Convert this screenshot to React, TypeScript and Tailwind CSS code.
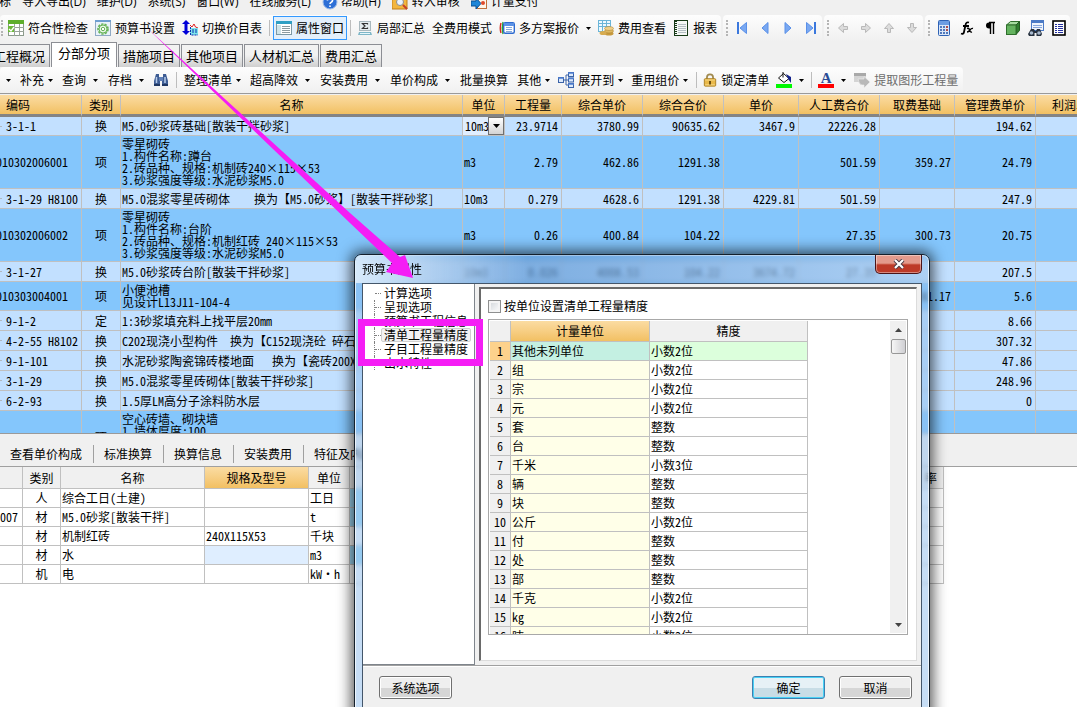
import type { ReactNode } from "react";

const Icon = ({ children, size = 16 }: { children: ReactNode; size?: number }) => (
  <svg width={size} height={size} viewBox="0 0 16 16" className="shrink-0" aria-hidden="true">
    {children}
  </svg>
);

const CheckGridIcon = () => (
  <Icon>
    <rect x="0.5" y="0.5" width="15" height="15" fill="#fff" stroke="#8a9a8a" />
    <rect x="0" y="0" width="16" height="4" fill="#5fae2c" />
    <path d="M0 7.5h16M0 11.5h16M6.5 4v12M11.5 4v12" stroke="#9aa49a" />
    <rect x="0" y="6" width="6" height="6" fill="#6db93a" />
    <path d="M1 9l2 2 3-4" stroke="#fff" fill="none" strokeWidth="1.3" />
  </Icon>
);

const BookSettingsIcon = () => (
  <Icon>
    <rect x="0.5" y="0.5" width="15" height="15" fill="#e9f2fb" stroke="#8fa9c4" />
    <rect x="0" y="0" width="16" height="2" fill="#6f9fd0" />
    <circle cx="8" cy="9" r="5" fill="#eaf7e6" stroke="#67b35a" strokeWidth="1.6" strokeDasharray="2.4 1.1" />
    <circle cx="8" cy="9" r="4" fill="none" stroke="#67b35a" />
    <circle cx="8" cy="9" r="1.7" fill="#fff" stroke="#67b35a" />
  </Icon>
);

const SwitchPriceIcon = () => (
  <Icon>
    <path d="M4 0l4 4H5.500v7H8l-4 4-4-4h2.500V4H0z" fill="#0000d8" />
    <path d="M8 5l2 2 2-3 1.500 3 2.500 1" stroke="#e02020" fill="none" />
    <rect x="8" y="8" width="8" height="7" fill="#7fe4ea" />
    <path d="M8.500 7v8H16M10 10h5M10 12h5" stroke="#0b2bb0" fill="none" strokeDasharray="2 1" />
  </Icon>
);

const PropertyWindowIcon = () => (
  <Icon>
    <rect x="0.5" y="1.5" width="15" height="13" fill="#fff" stroke="#7d98a5" />
    <rect x="0" y="1" width="16" height="3" fill="#2f9fc4" />
    <rect x="1" y="5" width="4" height="9" fill="#cfe4ea" />
    <path d="M6 6.500h8M6 8.500h8M6 10.500h8M6 12.500h8" stroke="#8b9aa0" />
  </Icon>
);

const SumIcon = () => (
  <Icon>
    <rect x="2.5" y="1.5" width="11" height="9" fill="#e4ecee" stroke="#a9b8be" />
    <path d="M10.500 4.500v-1h-5l2.500 2.500-2.500 2.500h5v-1" stroke="#333" fill="none" strokeWidth="1.2" />
    <path d="M2 12h12l1 3H1z" fill="#7fb7c8" />
    <path d="M3 13.500h10" stroke="#e8f6fa" />
  </Icon>
);

const QuotesIcon = () => (
  <Icon>
    <path d="M2 3Q0.500 8 2 13" stroke="#d52b1e" fill="none" strokeWidth="1.4" />
    <path d="M4 2Q2.500 8 4 14" stroke="#2fa336" fill="none" strokeWidth="1.4" />
    <rect x="4.7" y="2.7" width="10.600" height="10.600" rx="1.5" fill="#fff" stroke="#2e6bd0" strokeWidth="1.4" />
    <rect x="5" y="3" width="10" height="3" fill="#5b92e6" />
    <path d="M7 7.500h6M7 9.500h6M7 11.500h6" stroke="#86a9dd" />
  </Icon>
);

const CostViewIcon = () => (
  <Icon>
    <rect x="0.5" y="0.5" width="12" height="11" fill="#eef9ff" stroke="#6bb5d8" />
    <path d="M0 3.500h13M0 6.500h13M4.500 0v12M8.500 0v12" stroke="#6bb5d8" />
    <ellipse cx="11" cy="13.5" rx="4.5" ry="2" fill="#c79a3e" />
    <ellipse cx="11" cy="11" rx="4.5" ry="2" fill="#dfb860" stroke="#a87c28" strokeWidth="0.5" />
    <ellipse cx="11" cy="8.5" rx="4.5" ry="2" fill="#efd08a" stroke="#a87c28" strokeWidth="0.5" />
    <ellipse cx="5" cy="13" rx="3.5" ry="2" fill="#d8ac50" />
  </Icon>
);

const ReportIcon = () => (
  <Icon>
    <rect x="1.5" y="0.5" width="13" height="15" fill="#f5f8f5" stroke="#173a17" />
    <path d="M3 1v14" stroke="#173a17" strokeDasharray="1 1" strokeWidth="2" />
    <path d="M5 4.500h8M5 6.500h8M5 8.500h8M5 10.500h8M5 12.500h8" stroke="#b5bfc5" />
  </Icon>
);

const BinocularsIcon = () => (
  <Icon>
    <path d="M3 2h3v3l1 2v7H1V9z" fill="#3d5c93" />
    <path d="M10 2h3l2 7v5H9V7l1-2z" fill="#3d5c93" />
    <rect x="6" y="5" width="4" height="4" fill="#5f7fb6" />
    <path d="M3.500 5v6M12 5v6" stroke="#b7cbea" strokeWidth="1.5" />
    <path d="M1 13h6M9 13h6" stroke="#1f3763" strokeWidth="2" />
  </Icon>
);

const ExpandIcon = () => (
  <Icon>
    <path d="M6 8h4M8 3v10M8 3h2M8 13h2" stroke="#3a63a8" fill="none" />
    <rect x="0.5" y="5.5" width="5" height="5" fill="#dce9fb" stroke="#3a63a8" />
    <rect x="10.5" y="0.5" width="5" height="4" fill="#dce9fb" stroke="#3a63a8" />
    <rect x="10.5" y="6" width="5" height="4" fill="#dce9fb" stroke="#3a63a8" />
    <rect x="10.5" y="11.5" width="5" height="4" fill="#dce9fb" stroke="#3a63a8" />
    <path d="M0 6h6M10 1h6M10 6.500h6M10 12h6" stroke="#4f7fcf" strokeWidth="1.6" />
  </Icon>
);

const LockIcon = () => (
  <Icon size={14}>
    <path d="M4.500 8V5a3.500 3.500 0 0 1 7 0v3" fill="none" stroke="#a08a50" strokeWidth="2" />
    <rect x="1.5" y="6.5" width="13" height="8.5" rx="1" fill="#e9b94a" stroke="#a67a1c" />
    <path d="M2.500 8h11M2.500 13.500h11" stroke="#f7dc92" />
    <path d="M8 9v4" stroke="#5b400a" strokeWidth="2" />
  </Icon>
);

const BucketIcon = () => (
  <Icon>
    <path d="M2.500 6l5-4.500L13 6.500 8 10.500z" fill="#fff" stroke="#111" />
    <path d="M7 0v5.500" stroke="#111" />
    <path d="M10 2l5 3v6l-2.500-3.500z" fill="#12218c" />
    <rect x="0" y="12" width="16" height="4" fill="#00f800" />
  </Icon>
);

const ExtractIcon = () => (
  <Icon>
    <rect x="0" y="1" width="12" height="9" fill="#d4d4d4" />
    <rect x="0" y="1" width="12" height="3" fill="#a9a9a9" />
    <path d="M4 7h6V4.500l6 5.500-6 6v-3H8q-3 0-4-6z" fill="#b9b9b9" stroke="#efefef" strokeWidth="0.6" />
  </Icon>
);

const HelpIcon = () => (
  <Icon>
    <circle cx="8" cy="8" r="7" fill="#2d6fd6" stroke="#9fbce8" />
    <path d="M5.500 6.500a2.500 2.500 0 1 1 3.500 2q-1 .5-1 1.500M8 11.500v1.500" stroke="#fff" strokeWidth="1.6" fill="none" />
  </Icon>
);

const AuditIcon = () => (
  <Icon>
    <path d="M0 3h6l2 2h7v10H0z" fill="#f3b63e" stroke="#c17f16" />
    <circle cx="8" cy="8" r="3.5" fill="#eaf4ff" stroke="#8a8a8a" />
    <path d="M11 11l4 4" stroke="#c5402a" strokeWidth="2" />
  </Icon>
);

const PayIcon = () => (
  <Icon>
    <rect x="6.5" y="1.5" width="9" height="13" fill="#fff6e8" stroke="#c0703a" />
    <path d="M0 7h5V4l5 5.500L5 15v-3H0z" fill="#1f86d8" stroke="#0d4f91" />
    <circle cx="12" cy="9" r="2" fill="#e04a2a" />
  </Icon>
);

const FirstIcon = () => (
  <Icon>
    <path d="M4 2v12" stroke="#3b78dd" strokeWidth="2" />
    <path d="M12.500 2.500v11L6 8z" fill="#79a8f2" stroke="#5a90e8" />
  </Icon>
);
const PrevIcon = () => (
  <Icon>
    <path d="M11 2.500v11L5 8z" fill="#79a8f2" stroke="#5a90e8" />
  </Icon>
);
const NextIcon = () => (
  <Icon>
    <path d="M5 2.500v11L11 8z" fill="#79a8f2" stroke="#5a90e8" />
  </Icon>
);
const LastIcon = () => (
  <Icon>
    <path d="M12 2v12" stroke="#3b78dd" strokeWidth="2" />
    <path d="M3.500 2.500v11L10 8z" fill="#79a8f2" stroke="#5a90e8" />
  </Icon>
);

const arrowTurn = {
  left: "rotate(180 8 8)",
  right: "",
  up: "rotate(-90 8 8)",
  down: "rotate(90 8 8)",
};

const MoveIcon = ({ to }: { to: keyof typeof arrowTurn }) => (
  <Icon>
    <path d="M3.500 6.500h4v-3L12.500 8l-5 4.500v-3h-4z" fill="#dcdcdc" stroke="#b9b9b9" transform={arrowTurn[to]} />
  </Icon>
);

const CalcIcon = () => (
  <Icon>
    <rect x="2.5" y="0.5" width="11" height="15" rx="1" fill="#dbe7f8" stroke="#2f62b5" />
    <rect x="3" y="1" width="10" height="4" fill="#6c9ce2" />
    <path d="M4 7h8M4 10h8M4 13h8" stroke="#2456a8" strokeWidth="1.6" strokeDasharray="2 1" />
    <path d="M10 7h2M10 10h2" stroke="#d0402a" strokeWidth="1.6" />
  </Icon>
);
const FxIcon = () => (
  <Icon>
    <path d="M10 2.500q-3-1-3.500 2.500L5 12q-.5 2.500-3 1.500M4 6h6" stroke="#000" strokeWidth="1.8" fill="none" />
    <path d="M8 8.500q2-1 2.500 1.500t2.500 2M14 8.500q-1.500-.5-3 1.500t-3 2" stroke="#000" strokeWidth="1.4" fill="none" />
  </Icon>
);
const ParaIcon = () => (
  <Icon>
    <path d="M7 2.500a3 3 0 0 0 0 6h1v-6z" fill="#000" />
    <path d="M13 2.500H7M8.500 2v12M11.500 2v12" fill="none" stroke="#000" strokeWidth="1.4" />
  </Icon>
);
const CubeIcon = () => (
  <Icon>
    <path d="M1.500 5l4-3.500h9L11 5z" fill="#a6dca0" stroke="#2f6e2c" />
    <path d="M11 5l3.500-3.500v9L11 14.500z" fill="#2f7d2f" stroke="#235c22" />
    <rect x="1.5" y="5" width="9.5" height="9.5" fill="#64b35f" stroke="#2f6e2c" />
  </Icon>
);
const FindSheetIcon = () => (
  <Icon>
    <rect x="3.5" y="0.5" width="12" height="10" fill="#eef4fd" stroke="#4b7ac6" />
    <rect x="3" y="0" width="13" height="3" fill="#4b7ac6" />
    <path d="M5 5.500h9M5 7.500h9" stroke="#86a6dc" />
    <path d="M3 9h3l1 2h1l1-2h3l2 5-1 2H8.500v-3h-2v3H1l-1-2z" fill="#26303e" />
    <circle cx="3.5" cy="13" r="1.8" fill="#a9bacf" />
    <circle cx="11" cy="13" r="1.8" fill="#a9bacf" />
  </Icon>
);
const ListIcon = () => (
  <Icon>
    <rect x="2" y="1" width="12" height="14" fill="#fff" stroke="#000" strokeWidth="1.6" />
    <path d="M4 4.500h2M7 4.500h5M4 6.500h2M7 6.500h5M4 8.500h2M7 8.500h5M4 10.500h2M7 10.500h5M4 12.500h2M7 12.500h5" stroke="#2431a0" />
  </Icon>
);

const Caret = () => (
  <svg width="5" height="3" viewBox="0 0 5 3" className="shrink-0" aria-hidden="true">
    <path d="M0 0h5L2.500 3z" fill="#000" />
  </svg>
);

const Sep = () => <span className="mx-[3px] h-4 w-px shrink-0 bg-[#bdbdbd]" />;

const Grip = () => <span className="mr-[2px] h-4 w-0 shrink-0 border-l-2 border-dotted border-[#b5b5b5]" />;

const Strip = ({ children, label }: { children: ReactNode; label: string }) => (
  <div role="toolbar" aria-label={label} className="flex h-[26px] shrink-0 items-center rounded-sm bg-linear-to-b from-[#fdfdfd] to-[#f0f0f0]">
    {children}
  </div>
);

type ButtonProps = { icon?: ReactNode; text?: string; caret?: boolean; wide?: boolean };

const ButtonBody = ({ icon, text, caret, wide }: ButtonProps) => (
  <>
    {icon}
    {text && <span className={icon ? "ml-1" : ""}>{text}</span>}
    {caret && (
      <span className={wide ? "ml-[7px]" : text ? "ml-1" : ""}>
        <Caret />
      </span>
    )}
  </>
);

const ToolButton = (props: ButtonProps) => (
  <button type="button" className="mr-px flex h-[22px] shrink-0 items-center px-[3px] whitespace-nowrap">
    <ButtonBody {...props} />
  </button>
);

const MenuButton = (props: ButtonProps) => (
  <button type="button" className={`mr-px flex h-[22px] shrink-0 items-center pl-1 whitespace-nowrap ${props.wide ? "pr-[5px]" : "pr-1"}`}>
    <ButtonBody {...props} />
  </button>
);

const IconButton = ({ children, label }: { children: ReactNode; label: string }) => (
  <button type="button" aria-label={label} className="flex h-[22px] w-[23px] shrink-0 items-center justify-center">
    {children}
  </button>
);

const MenuBar = () => (
  <nav className="flex h-[15px] items-end overflow-hidden bg-[#f0f0f0]">
    <div className="-ml-[13px] flex h-[26px] shrink-0 items-center gap-[11px] font-['Open_Sans','Noto_Sans_CJK_SC',sans-serif] whitespace-nowrap">
      <button type="button">指标</button>
      <button type="button">导入导出(D)</button>
      <button type="button">维护(D)</button>
      <button type="button">系统(S)</button>
      <button type="button">窗口(W)</button>
      <button type="button">在线服务(L)</button>
      <button type="button" className="flex items-center gap-[3px]">
        <HelpIcon />
        帮助(H)
      </button>
      <button type="button" className="flex items-center gap-1">
        <AuditIcon />
        转入审核
      </button>
      <button type="button" className="flex items-center gap-1">
        <PayIcon />
        计量支付
      </button>
    </div>
  </nav>
);

const MainToolbar = () => (
  <div className="flex gap-[2px] overflow-hidden">
    <Strip label="常用">
      <span className="w-px" />
      <Grip />
      <ToolButton icon={<CheckGridIcon />} text="符合性检查" />
      <ToolButton icon={<BookSettingsIcon />} text="预算书设置" />
      <ToolButton icon={<SwitchPriceIcon />} text="切换价目表" />
      <Sep />
      <button type="button" className="flex h-6 shrink-0 items-center gap-1 border border-[#3399ff] bg-[#e3effb] px-[2px] whitespace-nowrap">
        <PropertyWindowIcon />
        属性窗口
      </button>
      <Sep />
      <ToolButton icon={<SumIcon />} text="局部汇总" />
      <ToolButton text="全费用模式" />
      <ToolButton icon={<QuotesIcon />} text="多方案报价" caret wide />
      <ToolButton icon={<CostViewIcon />} text="费用查看" />
      <ToolButton icon={<ReportIcon />} text="报表" />
    </Strip>
    <Strip label="导航">
      <span className="w-[3px]" />
      <Grip />
      <IconButton label="首条"><FirstIcon /></IconButton>
      <IconButton label="上一条"><PrevIcon /></IconButton>
      <IconButton label="下一条"><NextIcon /></IconButton>
      <IconButton label="末条"><LastIcon /></IconButton>
    </Strip>
    <Strip label="移动">
      <span className="w-[3px]" />
      <Grip />
      <IconButton label="左移"><MoveIcon to="left" /></IconButton>
      <IconButton label="右移"><MoveIcon to="right" /></IconButton>
      <IconButton label="上移"><MoveIcon to="up" /></IconButton>
      <IconButton label="下移"><MoveIcon to="down" /></IconButton>
    </Strip>
    <Strip label="工具">
      <span className="w-[3px]" />
      <Grip />
      <IconButton label="计算器"><CalcIcon /></IconButton>
      <IconButton label="函数"><FxIcon /></IconButton>
      <IconButton label="段落"><ParaIcon /></IconButton>
      <IconButton label="模型"><CubeIcon /></IconButton>
      <IconButton label="查找"><FindSheetIcon /></IconButton>
      <IconButton label="列表"><ListIcon /></IconButton>
    </Strip>
  </div>
);

const tabs = ["工程概况", "分部分项", "措施项目", "其他项目", "人材机汇总", "费用汇总"];

const PageTabs = () => (
  <div role="tablist" className="-ml-3 flex h-[26px] items-end gap-px overflow-hidden text-[13px] whitespace-nowrap">
    {tabs.map((tab, i) =>
      i === 1 ? (
        <button key={tab} role="tab" aria-selected type="button" className="h-[25px] border border-b-0 border-[#8c8e94] bg-white px-[6px] pb-[6px] leading-5">
          {tab}
        </button>
      ) : (
        <button key={tab} role="tab" type="button" className="h-[23px] border border-b-0 border-[#8c8e94] bg-linear-to-b from-[#f2f2f2] from-45% to-[#cfcfcf] px-1 leading-5">
          {tab}
        </button>
      ),
    )}
  </div>
);

const GridToolbar = () => (
  <div className="flex overflow-hidden">
    <Strip label="清单">
      <span className="w-[2px]" />
      <MenuButton caret />
      <MenuButton text="补充" caret />
      <MenuButton text="查询" caret wide />
      <MenuButton text="存档" caret wide />
      <ToolButton icon={<BinocularsIcon />} />
      <Sep />
      <MenuButton text="整理清单" caret />
      <MenuButton text="超高降效" caret wide />
      <MenuButton text="安装费用" caret wide />
      <MenuButton text="单价构成" caret wide />
      <MenuButton text="批量换算" />
      <MenuButton text="其他" caret />
      <ToolButton icon={<ExpandIcon />} text="展开到" caret />
      <MenuButton text="重用组价" caret />
      <Sep />
      <ToolButton icon={<LockIcon />} text="锁定清单" />
      <ToolButton icon={<BucketIcon />} caret wide />
      <Sep />
      <button type="button" aria-label="字体颜色" className="mr-px flex h-[22px] items-center px-[3px]">
        <span className="h-4 w-4 border-b-4 border-[#ff0000] text-center font-['Liberation_Serif',serif] text-[15px] leading-3 font-bold text-[#2b4c95]">A</span>
        <span className="ml-[7px]"><Caret /></span>
      </button>
      <button type="button" disabled className="mr-px flex h-[22px] shrink-0 items-center gap-1 px-1 whitespace-nowrap text-[#6d6d6d]">
        <ExtractIcon />
        提取图形工程量
      </button>
    </Strip>
  </div>
);

const headers = ["编码", "类别", "名称", "单位", "工程量", "综合单价", "综合合价", "单价", "人工费合价", "取费基础", "管理费单价", "利润单价"];

type Row = { code: string; kind: string; name: string; nums: string[]; size: "first" | "s" | "m" | "l" };

const rows: Row[] = [
  { code: "3-1-1", kind: "换", name: "M5.0砂浆砖基础[散装干拌砂浆]", nums: ["10m3", "23.9714", "3780.99", "90635.62", "3467.9", "22226.28", "", "194.62"], size: "first" },
  { code: "010302006001", kind: "项", name: "零星砌砖\n1.构件名称:蹲台\n2.砖品种、规格:机制砖240×115×53\n3.砂浆强度等级:水泥砂浆M5.0", nums: ["m3", "2.79", "462.86", "1291.38", "", "501.59", "359.27", "24.79"], size: "l" },
  { code: "3-1-29 H8100", kind: "换", name: "M5.0混浆零星砖砌体    换为【M5.0砂浆】[散装干拌砂浆]", nums: ["10m3", "0.279", "4628.6", "1291.38", "4229.81", "501.59", "", "247.9"], size: "s" },
  { code: "010302006002", kind: "项", name: "零星砌砖\n1.构件名称:台阶\n2.砖品种、规格:机制红砖 240×115×53\n3.砂浆强度等级:水泥砂浆M5.0", nums: ["m3", "0.26", "400.84", "104.22", "", "27.35", "300.73", "20.75"], size: "l" },
  { code: "3-1-27", kind: "换", name: "M5.0砂浆砖台阶[散装干拌砂浆]", nums: ["10m3", "0.026", "4008.53", "104.22", "3674.72", "27.35", "", "207.5"], size: "s" },
  { code: "010303004001", kind: "项", name: "小便池槽\n见设计L13J11-104-4", nums: ["", "", "", "", "", "", "81.17", "5.6"], size: "m" },
  { code: "9-1-2", kind: "定", name: "1:3砂浆填充料上找平层20mm", nums: ["", "", "", "", "", "", "", "8.66"], size: "s" },
  { code: "4-2-55 H8102", kind: "换", name: "C202现浇小型构件  换为【C152现浇砼 碎石", nums: ["", "", "", "", "", "", "", "307.32"], size: "s" },
  { code: "9-1-101", kind: "换", name: "水泥砂浆陶瓷锦砖楼地面   换为【瓷砖200X", nums: ["", "", "", "", "", "", "", "47.86"], size: "s" },
  { code: "3-1-29", kind: "换", name: "M5.0混浆零星砖砌体[散装干拌砂浆]", nums: ["", "", "", "", "", "", "", "248.96"], size: "s" },
  { code: "6-2-93", kind: "换", name: "1.5厚LM高分子涂料防水层", nums: ["", "", "", "", "", "", "", "0"], size: "s" },
  { code: "", kind: "项", name: "空心砖墙、砌块墙\n1.墙体厚度:100\n \n ", nums: ["", "", "", "", "", "", "", ""], size: "l" },
];

const rowClass = {
  first: "h-[19px] bg-[#c2e0ff]",
  s: "h-5 bg-[#c2e0ff]",
  m: "h-[29px] bg-[#84c6fc]",
  l: "h-[53px] bg-[#84c6fc]",
};
const cell = "border-r border-b border-[#c0c0c0] overflow-hidden p-0";

const UnitSelect = () => (
  <div className="relative h-[18px] bg-[#e0eeff]">
    <select aria-label="单位" className="h-full w-full appearance-none overflow-hidden bg-transparent pr-4 pl-[2px] outline-none">
      <option>10m3</option>
    </select>
    <span className="pointer-events-none absolute top-0 right-0 flex h-[18px] w-4 items-center justify-center border border-[#707070] bg-linear-to-b from-white to-[#d4d4d4]">
      <svg width="7" height="4" viewBox="0 0 7 4"><path d="M0 0h7L3.500 4z" /></svg>
    </span>
  </div>
);

const BudgetGrid = () => (
  <div className="h-[341px] shrink-0 overflow-hidden border-t border-b border-[#9a9a9a] pt-px">
    <table className="-ml-5 w-[calc(100%+60px)] table-fixed border-separate border-spacing-0 leading-3">
      <colgroup>
        <col className="w-[102px]" />
        <col className="w-[39px]" />
        <col className="w-[342px]" />
        <col className="w-[42px]" />
        <col className="w-[57px]" />
        <col className="w-[81px]" />
        <col className="w-[81px]" />
        <col className="w-[75px]" />
        <col className="w-[81px]" />
        <col className="w-[75px]" />
        <col className="w-[81px]" />
        <col />
      </colgroup>
      <thead>
        <tr className="h-[22px]">
          {headers.map((h, i) => (
            <th key={h} className={`border-r border-b-3 border-r-[#c0c0c0] border-b-[#848484] bg-linear-to-b from-[#fbdca2] to-[#f2c062] p-0 font-normal ${i === 0 ? "pl-[26px] text-left" : ""}`}>
              {h}
            </th>
          ))}
        </tr>
      </thead>
      <tbody>
        {rows.map((row, i) => {
          const child = row.size === "s" || row.size === "first";
          return (
            <tr key={i} className={rowClass[row.size]}>
              <td className={cell}>
                <div className="flex items-center whitespace-pre">
                  {child && <span className="mr-1 ml-[14px] h-px w-2 bg-[#b0b8c0]" />}
                  <span className={child ? "" : "ml-4"}>{row.code}</span>
                </div>
              </td>
              <td className={`${cell} text-center`}>{row.kind}</td>
              <td className={`${cell} pl-px whitespace-pre`}>{row.name}</td>
              {row.nums.map((n, j) => (
                <td key={j} className={`${cell} ${j === 0 ? (i === 0 ? "" : "pl-px") : "pr-[3px] text-right"}`}>
                  {i === 0 && j === 0 ? <UnitSelect /> : n}
                </td>
              ))}
              <td className={cell} />
            </tr>
          );
        })}
      </tbody>
    </table>
  </div>
);

const resources = [
  ["", "人", "综合工日(土建)", "", "工日"],
  ["007", "材", "M5.0砂浆[散装干拌]", "", "t"],
  ["", "材", "机制红砖", "240X115X53", "千块"],
  ["", "材", "水", "", "m3"],
  ["", "机", "电", "", "kW·h"],
];

const rc = "border-r border-b border-[#c0c0c0] p-0";

const ResourcePanel = () => (
  <section className="flex-1 bg-white">
    <div className="border-b border-[#a0a0a0] bg-[#f0f0f0] pt-[10px]">
      <div className="flex h-[22px] items-center pb-[2px] whitespace-nowrap">
        {["查看单价构成", "标准换算", "换算信息", "安装费用", "特征及内容"].map((t) => (
          <button key={t} type="button" className="h-[18px] border-r border-[#a0a0a0] pr-[11px] pl-[10px]">
            {t}
          </button>
        ))}
      </div>
    </div>
    <table className="w-[944px] table-fixed border-separate border-spacing-0 leading-3">
      <colgroup>
        <col className="w-[23px]" />
        <col className="w-[38px]" />
        <col className="w-[144px]" />
        <col className="w-[104px]" />
        <col className="w-[41px]" />
        <col />
        <col className="w-[43px]" />
      </colgroup>
      <thead>
        <tr className="h-[22px] bg-[#f0f0f0]">
          <th className={rc} />
          <th className={`${rc} font-normal`}>类别</th>
          <th className={`${rc} font-normal`}>名称</th>
          <th className={`${rc} bg-linear-to-b from-[#fbdca2] to-[#f2c062] font-normal`}>规格及型号</th>
          <th className={`${rc} font-normal`}>单位</th>
          <th className={rc} />
          <th className={`${rc} pr-[6px] text-right font-normal`}>率</th>
        </tr>
      </thead>
      <tbody>
        {resources.map((r, i) => (
          <tr key={i} className="h-[19px]">
            <td className={`${rc} pr-1 text-right`}>{r[0]}</td>
            <td className={`${rc} text-center`}>{r[1]}</td>
            <td className={`${rc} pl-px`}>{r[2]}</td>
            <td className={`${rc} pl-px ${i === 3 ? "bg-[#dfeeff]" : ""}`}>{r[3]}</td>
            <td className={`${rc} pl-px`}>{r[4]}</td>
            <td className={`${rc} ${i === 2 || i === 4 ? "" : "bg-[#9fd8f5]"}`} />
            <td className={rc} />
          </tr>
        ))}
      </tbody>
    </table>
  </section>
);

const treeItems = ["计算选项", "呈现选项", "预算书工程信息", "清单工程量精度", "子目工程量精度", "山水特性"];

const units = [
  ["其他未列单位", "小数2位"],
  ["组", "小数2位"],
  ["宗", "小数2位"],
  ["元", "小数2位"],
  ["套", "整数"],
  ["台", "整数"],
  ["千米", "小数3位"],
  ["辆", "整数"],
  ["块", "整数"],
  ["公斤", "小数2位"],
  ["付", "整数"],
  ["处", "整数"],
  ["部", "整数"],
  ["千克", "小数2位"],
  ["kg", "小数2位"],
  ["吨", "小数3位"],
];

const PrecisionTable = () => (
  <div className="mt-[6px] flex h-[316px] justify-between overflow-hidden border border-[#a8a8a8] p-px">
    <table className="w-[318px] table-fixed border-separate border-spacing-0 self-start leading-3">
      <colgroup>
        <col className="w-[21px]" />
        <col className="w-[139px]" />
        <col className="w-[158px]" />
      </colgroup>
      <thead>
        <tr className="h-[21px] bg-[#f0f0f0]">
          <th className={rc} />
          <th className={`${rc} bg-linear-to-b from-[#fbdca2] to-[#f2c062] font-normal`}>计量单位</th>
          <th className={`${rc} font-normal`}>精度</th>
        </tr>
      </thead>
      <tbody>
        {units.map(([unit, digits], i) => (
          <tr key={unit} className="h-[19px]">
            <td className={`${rc} text-center ${i === 0 ? "bg-[#fdd28c]" : "bg-[#f0f0f0]"}`}>{i + 1}</td>
            <td className={`${rc} pl-px ${i === 0 ? "bg-[#c4f0e2]" : "bg-[#ffffe8]"}`}>{unit}</td>
            <td className={`${rc} pl-px ${i === 0 ? "bg-[#dcffdc]" : "bg-white"}`}>{digits}</td>
          </tr>
        ))}
      </tbody>
    </table>
    <div className="flex w-4 flex-col items-center bg-[#f0f0f0]">
      <button type="button" aria-label="向上" className="flex h-[18px] w-full items-center justify-center">
        <svg width="7" height="4" viewBox="0 0 7 4"><path d="M0 4h7L3.500 0z" fill="#444" /></svg>
      </button>
      <span className="h-[15px] w-[15px] rounded-xs border border-[#979797] bg-linear-to-r from-[#f6f6f6] to-[#cfcfd3]" />
      <button type="button" aria-label="向下" className="mt-auto flex h-4 w-full items-center justify-center">
        <svg width="7" height="4" viewBox="0 0 7 4"><path d="M0 0h7L3.500 4z" fill="#444" /></svg>
      </button>
    </div>
  </div>
);

const DialogButton = ({ text, primary }: { text: string; primary?: boolean }) => (
  <button
    type="button"
    className={`h-[23px] w-[73px] rounded-[3px] border bg-linear-to-b from-50% to-50% ${
      primary ? "border-[#3c7fb1] from-[#e6f1f6] to-[#c8dde6] inset-ring-1 inset-ring-[#48d1f5]" : "border-[#707070] from-[#efefef] to-[#d6d6d6] inset-ring-1 inset-ring-white"
    }`}
  >
    {text}
  </button>
);

const PropertyDialog = () => (
  <div
    role="dialog"
    aria-label="预算书属性"
    className="absolute top-[254px] left-[354px] flex h-[470px] w-[576px] flex-col rounded-t-[7px] border border-[#14202c] bg-[#8dbcec]/50 px-[7px] shadow-[0_0_14px_3px_rgba(0,0,0,0.65)] inset-ring-1 inset-ring-white/70 backdrop-blur-[2px]"
  >
    <div className="-mx-[6px] flex h-[28px] shrink-0 items-start justify-between rounded-t-md bg-linear-to-r from-[#dcecfb]/90 via-[#3f80c4]/40 via-30% to-[#b4d3f2]/40 px-[6px]">
      <h2 className="pt-1 leading-5">预算书属性</h2>
      <button type="button" aria-label="关闭" className="flex h-[19px] w-[47px] items-center justify-center rounded-b-[5px] border border-t-0 border-[#4b1418] bg-linear-to-b from-[#e39a8c] from-45% to-[#bd3a28] to-55% inset-ring-1 inset-ring-white/40">
        <svg width="12" height="10" viewBox="0 0 12 10">
          <path d="M2 1l8 8M10 1L2 9" stroke="#4a3a44" strokeWidth="4" />
          <path d="M2 1l8 8M10 1L2 9" stroke="#fff" strokeWidth="2.2" />
        </svg>
      </button>
    </div>
    <div className="flex flex-1 flex-col border border-b-0 border-[#44566a] bg-[#f0f0f0]">
      <div className="flex h-[382px] shrink-0 border-b border-[#a0a0a0]">
        <ul className="flex w-[112px] flex-col border-r border-b border-[#7f858c] bg-white pt-[2px] pb-[3px] pl-[11px]">
          {treeItems.map((item, i) => (
            <li key={item} className={`flex h-[14px] shrink-0 items-center whitespace-nowrap ${i === 0 ? "pl-px" : "border-l border-dotted border-[#808080]"}`}>
              <span className="w-[6px] shrink-0 border-t border-dotted border-[#808080]" />
              <button type="button" className={`rounded-xs border px-[2px] leading-3 ${i === 3 ? "border-[#d0d0d0] bg-[#f2f2f2]" : "border-transparent"}`}>
                {item}
              </button>
            </li>
          ))}
        </ul>
        <div className="mt-[3px] mr-1 mb-1 ml-1 flex-1 border-t-2 border-r border-b border-l-2 border-t-[#6a6a6a] border-r-[#dcdcdc] border-b-[#dcdcdc] border-l-[#6a6a6a] bg-white pt-[10px] pr-2 pl-[7px]">
          <label className="flex h-[14px] items-center gap-[3px]">
            <input type="checkbox" className="h-[13px] w-[13px] appearance-none border border-[#8e8f8f] bg-linear-to-br from-[#d0d4d8] to-white inset-ring-2 inset-ring-[#f4f4f4]" />
            按单位设置清单工程量精度
          </label>
          <PrecisionTable />
        </div>
      </div>
      <div className="flex items-center border-t border-white px-[9px] pt-[9px] pl-4">
        <DialogButton text="系统选项" />
        <span className="flex-1" />
        <DialogButton text="确定" primary />
        <span className="w-[14px]" />
        <DialogButton text="取消" />
      </div>
    </div>
  </div>
);

export default function App() {
  return (
    <main className="relative flex h-screen flex-col overflow-hidden bg-[#f0f0f0] font-['Noto_Sans_CJK_SC',sans-serif] text-[12px] leading-4 text-black [font-feature-settings:'hwid']">
      <MenuBar />
      <MainToolbar />
      <PageTabs />
      <GridToolbar />
      <BudgetGrid />
      <ResourcePanel />
      <PropertyDialog />
      {/* callout */}
      <div className="absolute top-[319px] left-[358px] h-[47px] w-[125px] border-[7px] border-[#f51df5]" />
      <svg width="440" height="290" viewBox="0 0 440 290" className="pointer-events-none absolute top-0 left-0" aria-hidden="true">
        <path d="M146 27L350 213l50 44 5-2 8 23-27-6 6-9-42-40z" fill="#f51df5" />
      </svg>
    </main>
  );
}
